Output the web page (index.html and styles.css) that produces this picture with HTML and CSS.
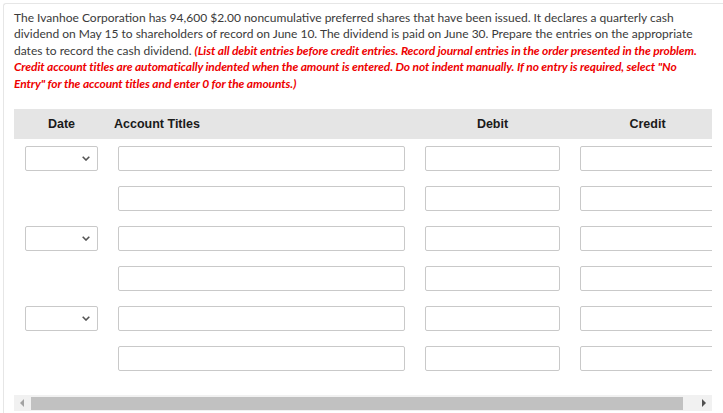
FILE: index.html
```html
<!DOCTYPE html>
<html lang="en">
<head>
<meta charset="utf-8">
<title>Journal entry</title>
<link rel="stylesheet" href="styles.css">
</head>
<body>
<div class="frame">
  <p class="question">The Ivanhoe Corporation has 94,600 $2.00 noncumulative preferred shares that have been issued. It declares a quarterly cash dividend on May 15 to shareholders of record on June 10. The dividend is paid on June 30. Prepare the entries on the appropriate dates to record the cash dividend. <em class="note">(List all debit entries before credit entries. Record journal entries in the order presented in the problem. Credit account titles are automatically indented when the amount is entered. Do not indent manually. If no entry is required, select "No Entry" for the account titles and enter 0 for the amounts.)</em></p>

  <div class="journal">
    <div class="table">
      <div class="grid head">
        <div class="h h-date">Date</div>
        <div class="h h-acct">Account Titles</div>
        <div class="h h-num">Debit</div>
        <div class="h h-num">Credit</div>
      </div>
      <div class="rows">
        <div class="grid row">
          <div class="sel"><select class="field"><option></option></select><svg class="chev" width="8" height="5" viewBox="0 0 8 5"><path d="M0.7 0.7 L4 4 L7.3 0.7" fill="none" stroke="#555" stroke-width="1.6"/></svg></div>
          <input class="field" type="text"><input class="field" type="text"><input class="field" type="text">
        </div>
        <div class="grid row">
          <div></div>
          <input class="field" type="text"><input class="field" type="text"><input class="field" type="text">
        </div>
        <div class="grid row">
          <div class="sel"><select class="field"><option></option></select><svg class="chev" width="8" height="5" viewBox="0 0 8 5"><path d="M0.7 0.7 L4 4 L7.3 0.7" fill="none" stroke="#555" stroke-width="1.6"/></svg></div>
          <input class="field" type="text"><input class="field" type="text"><input class="field" type="text">
        </div>
        <div class="grid row">
          <div></div>
          <input class="field" type="text"><input class="field" type="text"><input class="field" type="text">
        </div>
        <div class="grid row">
          <div class="sel"><select class="field"><option></option></select><svg class="chev" width="8" height="5" viewBox="0 0 8 5"><path d="M0.7 0.7 L4 4 L7.3 0.7" fill="none" stroke="#555" stroke-width="1.6"/></svg></div>
          <input class="field" type="text"><input class="field" type="text"><input class="field" type="text">
        </div>
        <div class="grid row">
          <div></div>
          <input class="field" type="text"><input class="field" type="text"><input class="field" type="text">
        </div>
      </div>
    </div>
  </div>

  <div class="hscroll">
    <div class="sb-btn"><span class="tri tri-left"></span></div>
    <div class="sb-track"><div class="sb-thumb"></div></div>
    <div class="sb-btn"><span class="tri tri-right"></span></div>
  </div>
</div>
</body>
</html>
```

FILE: styles.css
```css
html, body {
  margin: 0;
  padding: 0;
  background: #fff;
  height: 413px;
  overflow: hidden;
}

.frame {
  margin: 3px 0 0 3px;
  border-top: 1px solid #e6e6e6;
  border-left: 1px solid #e6e6e6;
  border-top-left-radius: 3px;
  padding: 6px 0 0 10px;
  height: 420px;
  box-sizing: border-box;
}

.question {
  margin: 0;
  width: 692px;
  font-family: Lato, "Noto Sans", sans-serif;
  font-size: 12px;
  line-height: 16.4px;
  color: #3a3a3a;
}

.note {
  color: #ee0000;
  font-style: italic;
  font-weight: 700;
  letter-spacing: -0.1px;
}

.journal {
  margin-top: 17px;
  width: 698px;
  overflow: hidden;
}

.table {
  width: 714px;
}

.grid {
  display: grid;
  grid-template-columns: 73px 287px 135px 135px;
  column-gap: 20px;
  padding-left: 11px;
}

.head {
  height: 30px;
  align-items: center;
  background: #e5e5e5;
  font-family: "Liberation Sans", Arial, sans-serif;
  font-weight: 700;
  font-size: 12.5px;
  color: #1a1a1a;
}

.h-date, .h-num { text-align: center; }
.h-acct { margin-left: -4px; }

.rows {
  padding-top: 7px;
  display: flex;
  flex-direction: column;
  gap: 15px;
}

.row { height: 25px; }

.field {
  box-sizing: border-box;
  height: 25px;
  width: 100%;
  margin: 0;
  padding: 0 4px;
  border: 1px solid #c9c9c9;
  border-radius: 2px;
  background: #fff;
  font-family: Lato, sans-serif;
  font-size: 13px;
  outline: none;
  -webkit-appearance: none;
  appearance: none;
}

.sel { position: relative; }

.chev {
  position: absolute;
  left: 57px;
  top: 10px;
  pointer-events: none;
}

.hscroll {
  margin-top: 24px;
  width: 698px;
  height: 16px;
  background: #f1f1f1;
  display: flex;
}

.sb-btn {
  width: 16px;
  flex: none;
  display: flex;
  align-items: center;
  justify-content: center;
}

.sb-track {
  flex: 1;
  padding: 2px 13px 1px 1px;
  display: flex;
}

.sb-thumb {
  flex: 1;
  background: #c1c1c1;
}

.tri {
  width: 0;
  height: 0;
  border-top: 4px solid transparent;
  border-bottom: 4px solid transparent;
}
.tri-left { border-right: 4px solid #a3a3a3; }
.tri-right { border-left: 4px solid #505050; }
```
